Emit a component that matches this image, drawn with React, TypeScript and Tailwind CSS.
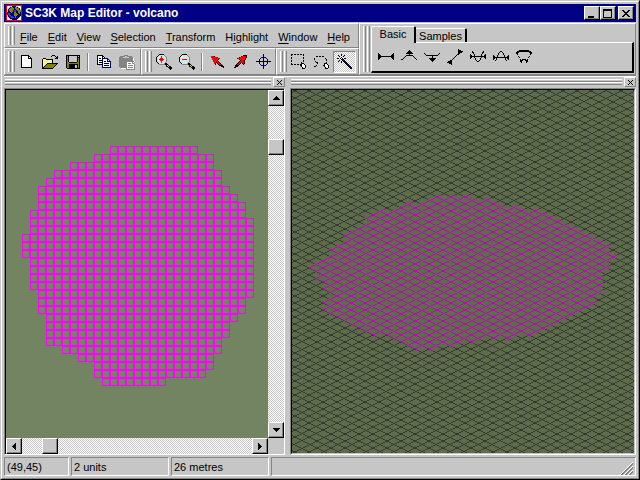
import React from "react";

const palette: Record<string, string> = {
  k: "#000000",
  w: "#ffffff",
  g: "#848484",
  o: "#848400",
  y: "#ffff00",
  b: "#000084",
  r: "#ff0000",
  c: "#d6e7e7",
  l: "#3a3ade",
  p: "#ffd6d6",
  s: "#c6c6e7",
};

const icons = {
  globe: [
    "rrrrrrrrrrrrrrrr",
    "rpwwsskbbbsswwpr",
    "rwwsboobbookswwr",
    "rwsbooooboooobwr",
    "rwbooooobbooobsr",
    "rsboooobllboooor",
    "rsbbooobllbbooor",
    "rbbbbobboobboobr",
    "rbllbbbbooobbobr",
    "rbllbbbboooobbkr",
    "rsbllbbbooobbbkr",
    "rwbblllbbobbbksr",
    "rwsbblllbobbkswr",
    "rwwskbbbbbbkswwr",
    "rpwwsskkkkkswwpr",
    "rrrrrrrrrrrrrrrr",
  ],
  newFile: [
    "",
    "..kkkkkkkk",
    "..kwwwwwwkk",
    "..kwwwwwwkwk",
    "..kwwwwwwkkkk",
    "..kwwwwwwwwwk",
    "..kwwwwwwwwwk",
    "..kwwwwwwwwwk",
    "..kwwwwwwwwwk",
    "..kwwwwwwwwwk",
    "..kwwwwwwwwwk",
    "..kwwwwwwwwwk",
    "..kwwwwwwwwwk",
    "..kkkkkkkkkkk",
  ],
  open: [
    "",
    "..........kkk",
    ".........k...k.k",
    "..............kk",
    ".kkk.........kkk",
    "kwywkkkkkkk",
    "kywywywywyk",
    "kwywywywywk",
    "kywywywywyk",
    "kwywykkkkkkkkkkk",
    "kywykoooooooook",
    "kwykoooooooook",
    "kykoooooooook",
    "kkoooooooook",
    "kkkkkkkkkkk",
  ],
  save: [
    "",
    ".kkkkkkkkkkkkkk",
    ".kok........k.k",
    ".kok........kkk",
    ".kok........kok",
    ".kok........kok",
    ".kok........kok",
    ".kok........kok",
    ".kookkkkkkkkook",
    ".kooooooooooook",
    ".kookkkkkkkkkok",
    ".kookkkkkk..kok",
    ".kookkkkkk..kok",
    ".kookkkkkk..kok",
    "..kkkkkkkkkkkkk",
  ],
  copy: [
    "",
    ".kkkkkk",
    ".kwwwwkk",
    ".kwwwwkwk",
    ".kwkkwbbbbbb",
    ".kwwwwbwwwwbb",
    ".kwkkkbwwwwbwb",
    ".kwwwwbwkkwbbbb",
    ".kwkkkbwwwwwwwb",
    ".kwwwwbwkkkkkwb",
    ".kkkkkbwwwwwwwb",
    "......bwkkkkkwb",
    "......bwwwwwwwb",
    "......bbbbbbbbb",
  ],
  paste: [
    "",
    ".....gggg",
    ".ggggg..ggggg",
    "gggg......gggg",
    "ggggggggggggggw",
    "ggggggggggggggw",
    "ggggggggggggggw",
    "gggggggggggggggw",
    "ggggggggwwwwwgw",
    "ggggggggwgggwgg",
    "ggggggggwwwwwwwg",
    "ggggggggwgggggwg",
    "ggggggggwwwwwwwg",
    ".gggggggwgggggwg",
    "..wwwwwgwwwwwwwg",
    ".......ggggggggg",
  ],
  zoomIn: [
    "...kkkkk",
    "..kcccccg",
    ".kcwcrcccg",
    "kcwccrccccg",
    "kcccrrrcccg",
    "kccrrrrrccg",
    "kcccrrrcccg",
    "kccccrccccg",
    ".kcccrcccg",
    "..kcccccgkk",
    "...ggggggkkk",
    "..........kyk",
    "..........kkykk",
    "............kkkk",
    ".............kkk",
    "..............k",
  ],
  zoomOut: [
    "...kkkkk",
    "..kcccccg",
    ".kcwcccccg",
    "kcwcccccccg",
    "kcccccccccg",
    "kccrrrrrccg",
    "kcccccccccg",
    "kcccccccccg",
    ".kcccccccg",
    "..kcccccgkk",
    "...ggggggkkk",
    "..........kyk",
    "..........kkykk",
    "............kkkk",
    ".............kkk",
    "..............k",
  ],
  arrowLeft: [
    "",
    "",
    ".rrrk",
    ".rrrrrrk",
    "..rrrrrrrk",
    "..rrrrrrk",
    "...rrrrk",
    "...rrrrrk",
    "....rrkrrk",
    "....rk.krrk",
    ".....k..krrk",
    ".........kkkk",
    "...........kkk",
    ".............k",
  ],
  arrowRight: [
    "",
    "..........kkkk",
    "........krrrrk",
    "......krrrrrrk",
    "....krrrrrrrk",
    "......krrrrrk",
    ".......krrrk",
    "......krrrrk",
    ".....krrkrrk",
    "....krrk.krk",
    "...krrk...k",
    "..kkkk",
    "..kkk",
    ".kk",
  ],
  target: [
    ".......k",
    ".......k",
    ".......k",
    ".....bbkbb",
    "....b..k..b",
    "...b...k...b",
    "...b...k...b",
    "kkkkkkkkkkkkkkk",
    "...b...k...b",
    "...b...k...b",
    "....b..k..b",
    ".....bbkbb",
    ".......k",
    ".......k",
    ".......k",
  ],
  marquee: [
    "kk.kk.kk.kk.k",
    "k...........k",
    "",
    "k...........k",
    "k...........k",
    "",
    "k...........k",
    "k...........k",
    "..........k",
    "k.........kkk",
    "kk.kk.kk.kkwwk",
    ".........kkwwwk",
    "..........kwwwk",
    "...........kwwk",
    "...........kkk",
  ],
  lasso: [
    "",
    "",
    "..kk.kk.kk",
    "",
    "k..........k",
    "k...........k",
    "............k",
    ".k...........",
    "..kk........k",
    "...k......kkk",
    "..........kwwk",
    "..k......kkwwwk",
    "kk........kwwwk",
    "...........kwwk",
    "...........kkk",
  ],
  wand: [
    "....k",
    ".k..k..k",
    "..k...k",
    "....k",
    "kk.kwk.kk",
    "....kbk",
    "..k..kbk",
    ".k..k.kbk",
    "....k..kbk",
    "........kbk",
    ".........kbk",
    "..........kbk",
    "...........kbk",
    "............kbk",
    ".............kk",
  ],
  level: [
    "",
    "",
    "",
    "",
    "k..............k",
    "kk............kk",
    "kkk..........kkk",
    "kkkkkkkkkkkkkkkk",
    "kkk..........kkk",
    "kk............kk",
    "k..............k",
  ],
  raise: [
    "",
    "........k",
    ".......kkk",
    "......kkkkk",
    ".....kkkkkkk",
    "........k",
    ".....kkkkkkk",
    "....k.......k",
    "...k.........k",
    "..k...........k",
    "kk.............k",
  ],
  lower: [
    "",
    "",
    "",
    "",
    "k..............k",
    ".k............k",
    "..kkkkkkkkkkkk",
    "........k",
    "........k",
    ".....kkkkkkk",
    "......kkkkk",
    ".......kkk",
    "........k",
  ],
  slope: [
    "...........k",
    "...........kkk",
    "...........kkkkk",
    "...........kkkk",
    "...........kk",
    "..........kk",
    ".........k",
    "........k",
    ".......k",
    "......k",
    ".....k",
    "...kk",
    ".kkkk",
    "kkkkk",
    "..kkk",
    "....k",
  ],
  valley: [
    "",
    "",
    "..k..........k",
    "..kk........kk",
    "...k........k",
    "k...k......k...k",
    "kk..k......k..kk",
    "kkkkkkkkkkkkkkkk",
    "kk..k......k..kk",
    "k....k....k....k",
    ".....k....k",
    "......k..k",
    ".......kk",
  ],
  hill: [
    "",
    "",
    ".......kk",
    "......k..k",
    ".....k....k",
    ".....k....k",
    "k...k......k...k",
    "kk..k......k..kk",
    "kkkkkkkkkkkkkkkk",
    "kk.k........k.kk",
    "k..k........k..k",
    "..k..........k",
  ],
  crater: [
    "",
    "...kkkkkkkkkk",
    ".kkkkkkkkkkkkkk",
    "kkk..........kkk",
    "kk............kk",
    ".k............k",
    "",
    "..k..........k",
    "...k........k",
    "",
    "....k.kkkk.k",
    "....kkk..kkk",
    "....kk....kk",
    ".....k....k",
  ],
  close: ["kk....kk", ".kk..kk", "..kkkk", "...kk", "..kkkk", ".kk..kk", "kk....kk"],
  maximize: [
    "kkkkkkkkk",
    "kkkkkkkkk",
    "k.......k",
    "k.......k",
    "k.......k",
    "k.......k",
    "k.......k",
    "k.......k",
    "kkkkkkkkk",
  ],
  minimize: ["", "", "", "", "", "", "", "kkkkkk", "kkkkkk"],
  smallClose: ["k...k", ".k.k", "..k", ".k.k", "k...k"],
  up: ["...k", "..kkk", ".kkkkk", "kkkkkkk"],
  down: ["kkkkkkk", ".kkkkk", "..kkk", "...k"],
  left: ["...k", "..kk", ".kkk", "kkkk", ".kkk", "..kk", "...k"],
  right: ["k", "kk", "kkk", "kkkk", "kkk", "kk", "k"],
};

type IconName = keyof typeof icons;

type PixelIconProps = {
  name: IconName;
};

const PixelIcon: React.FC<PixelIconProps> = ({ name }) => {
  const rows = icons[name];
  const width = Math.max(...rows.map((row) => row.length));
  const size = width > 12 ? 16 : width;
  const height = width > 12 ? 16 : rows.length;

  return (
    <svg
      width={size}
      height={height}
      shapeRendering="crispEdges"
      className="block shrink-0"
      aria-hidden="true"
    >
      {rows.map((row, y) =>
        row
          .split("")
          .map((p, x) =>
            palette[p] ? (
              <rect key={`${x}-${y}`} x={x} y={y} width="1" height="1" fill={palette[p]} />
            ) : null
          )
      )}
    </svg>
  );
};

const raised =
  "bg-[#c6c6c6] border border-t-white border-l-white border-b-black border-r-black shadow-[inset_-1px_-1px_0_#848484]";

const Gripper = () => (
  <div className="flex gap-px py-0.5 pl-[3px] shrink-0">
    <div className="w-[3px] bg-[#c6c6c6] border-l border-r border-l-white border-r-[#848484]" />
    <div className="w-[3px] bg-[#c6c6c6] border-l border-r border-l-white border-r-[#848484]" />
  </div>
);

const Separator = () => (
  <div className="w-2 h-[22px] flex justify-center py-0.5">
    <div className="w-0.5 border-l border-r border-l-[#848484] border-r-white" />
  </div>
);

type ToolButtonProps = {
  name: IconName;
  label: string;
  pressed?: boolean;
};

const ToolButton: React.FC<ToolButtonProps> = ({ name, label, pressed }) => (
  <button
    aria-label={label}
    className={
      pressed
        ? "w-[23px] h-[22px] pl-[3px] flex items-center border border-t-[#848484] border-l-[#848484] border-b-white border-r-white bg-[repeating-conic-gradient(#ffffff_0_25%,#c6c6c6_0_50%)] bg-[length:2px_2px]"
        : "w-[23px] h-[22px] pl-1 flex items-center"
    }
  >
    <PixelIcon name={name} />
  </button>
);

const band =
  "flex border-t border-l border-b border-r border-t-white border-l-white border-b-[#848484] border-r-[#848484]";

const menus = [
  ["", "F", "ile"],
  ["", "E", "dit"],
  ["", "V", "iew"],
  ["", "S", "election"],
  ["", "T", "ransform"],
  ["H", "i", "ghlight"],
  ["", "W", "indow"],
  ["", "H", "elp"],
];

const TitleBar = () => (
  <header className="h-[18px] shrink-0 bg-[#000084] flex items-center pl-0.5 pr-0.5">
    <PixelIcon name="globe" />
    <h1 className="flex-1 pl-[3px] text-white font-bold text-[12px] leading-4 whitespace-nowrap">
      SC3K Map Editor - volcano
    </h1>
    <button aria-label="Minimize" className={`w-4 h-3.5 pl-[3px] pt-px ${raised}`}>
      <PixelIcon name="minimize" />
    </button>
    <button aria-label="Maximize" className={`w-4 h-3.5 pl-0.5 pt-px ${raised}`}>
      <PixelIcon name="maximize" />
    </button>
    <button aria-label="Close" className={`w-4 h-3.5 ml-0.5 pl-[3px] ${raised}`}>
      <PixelIcon name="close" />
    </button>
  </header>
);

const MenuBar = () => (
  <nav className={`${band} h-[25px]`}>
    <Gripper />
    <div className="flex items-center pt-0.5">
      {menus.map(([before, key, after]) => (
        <button key={after} className="px-[5px] whitespace-nowrap">
          {before}
          <span className="underline underline-offset-2">{key}</span>
          {after}
        </button>
      ))}
    </div>
  </nav>
);

const ToolBars = () => (
  <div className="flex h-[27px]">
    <div className={`${band} pr-0.5`}>
      <Gripper />
      <div className="flex items-center">
        <ToolButton name="newFile" label="New" />
        <ToolButton name="open" label="Open" />
        <ToolButton name="save" label="Save" />
        <Separator />
        <ToolButton name="copy" label="Copy" />
        <ToolButton name="paste" label="Paste" />
      </div>
    </div>
    <div className={band}>
      <Gripper />
      <div className="flex items-center">
        <ToolButton name="zoomIn" label="Zoom in" />
        <ToolButton name="zoomOut" label="Zoom out" />
        <Separator />
        <ToolButton name="arrowLeft" label="Rotate left" />
        <ToolButton name="arrowRight" label="Rotate right" />
        <ToolButton name="target" label="Centre" />
      </div>
    </div>
    <div className={`${band} flex-1`}>
      <Gripper />
      <div className="flex items-center">
        <ToolButton name="marquee" label="Select rectangle" />
        <ToolButton name="lasso" label="Lasso" />
        <ToolButton name="wand" label="Magic wand" pressed />
      </div>
    </div>
  </div>
);

const shapeTools: [IconName, string][] = [
  ["level", "Level"],
  ["raise", "Raise"],
  ["lower", "Lower"],
  ["slope", "Slope"],
  ["valley", "Valley"],
  ["hill", "Hill"],
  ["crater", "Crater"],
];

const ShapeTabs = () => (
  <section className={`${band} flex-1 pr-px`}>
    <Gripper />
    <div className="flex-1 flex flex-col pl-px pt-0.5 pb-px">
      <div role="tablist" className="flex items-end h-4">
        <button
          role="tab"
          aria-selected="true"
          className="relative z-10 h-[17px] -mb-px w-[45px] leading-[14px] pb-0.5 bg-[#c6c6c6] border-t border-l border-r-2 border-t-white border-l-white border-r-black rounded-t-xs"
        >
          Basic
        </button>
        <button
          role="tab"
          aria-selected="false"
          className="h-3.5 w-[51px] leading-[14px] overflow-hidden border-t border-r-2 border-t-white border-r-black rounded-tr-xs"
        >
          Samples
        </button>
      </div>
      <div className="flex-1 flex items-center pl-0.5 border-t border-l border-b-2 border-r-2 border-t-white border-l-white border-b-black border-r-black">
        {shapeTools.map(([name, label]) => (
          <ToolButton key={name} name={name} label={label} />
        ))}
      </div>
    </div>
  </section>
);

const PaneHandle = () => (
  <div className="flex h-[11px] gap-0.5 shrink-0">
    <div className="flex-1 flex flex-col pt-0.5 pl-px">
      <div className="h-[3px] border-t border-b border-t-white border-b-[#848484]" />
      <div className="h-[3px] border-t border-b border-t-white border-b-[#848484]" />
    </div>
    <button
      aria-label="Close pane"
      className="w-3 h-2.5 pl-[3px] pt-px border border-t-white border-l-white border-b-[#848484] border-r-[#848484]"
    >
      <PixelIcon name="smallClose" />
    </button>
  </div>
);

// [first, end) column of the selection for every row of the map
const selection = [
  [11, 22], [9, 24], [6, 24], [4, 25], [3, 25], [2, 26], [2, 27], [2, 28],
  [1, 28], [1, 29], [1, 29], [0, 29], [0, 29], [0, 29], [1, 29], [1, 29],
  [1, 29], [1, 29], [2, 29], [2, 28], [2, 28], [3, 27], [3, 26], [3, 26],
  [3, 25], [5, 25], [7, 24], [9, 24], [9, 23], [10, 18],
];

const FlatMap = () => {
  const d = selection
    .map(([from, to], row) => {
      let cells = "";
      for (let col = from; col < to; col++) {
        cells += `M${16.5 + col * 8} ${56.5 + row * 8}h7v7h-7z`;
      }
      return cells;
    })
    .join("");

  return (
    <svg className="w-full h-full bg-[#738463]" role="img" aria-label="Flat map">
      <path d={d} fill="none" stroke="#ff00ff" shapeRendering="crispEdges" />
    </svg>
  );
};

const IsoMap = () => {
  // the lattice step is a 10 unit cell turned by 45 degrees,
  // every line starts at the same fraction of a pixel so that all are equally thick
  const step = 10 / Math.SQRT2;
  let grid = "";
  for (let i = -110; i < 240; i++) {
    const down = Math.round(98 + i * step) + 0.37;
    const up = Math.round(108 + i * step) + 0.37;
    grid += `M0 ${down}L1200 ${down + 600}M0 ${up}L1200 ${up - 600}`;
  }

  const point = (col: number, row: number) =>
    `${(168 + (col - row) * 6.95).toFixed(1)} ${(79 + (col + row) * 3.5).toFixed(1)}`;
  const area = selection
    .map(
      ([from, to], row) =>
        `M${point(from, row)}L${point(to, row)}L${point(to, row + 1)}L${point(from, row + 1)}z`
    )
    .join("");

  return (
    <svg className="w-full h-full bg-[#5d6d4a]" role="img" aria-label="Isometric map">
      <defs>
        <clipPath id="selected">
          <path d={area} />
        </clipPath>
      </defs>
      <path d={grid} fill="none" stroke="#333333" strokeWidth="0.9" shapeRendering="crispEdges" />
      <path
        d={grid}
        fill="none"
        stroke="#cc00cc"
        strokeWidth="0.9"
        shapeRendering="crispEdges"
        clipPath="url(#selected)"
      />
    </svg>
  );
};

const track =
  "flex bg-[repeating-conic-gradient(#ffffff_0_25%,#c6c6c6_0_50%)] bg-[length:2px_2px]";
const scrollButton = `size-4 shrink-0 flex items-center justify-center ${raised}`;

const FlatPane = () => (
  <section className="flex flex-col min-h-0">
    <PaneHandle />
    <div className="flex-1 min-h-0 border border-t-[#848484] border-l-[#848484] border-b-white border-r-white">
      <div className="h-full grid grid-cols-[minmax(0,1fr)_16px] grid-rows-[minmax(0,1fr)_16px] border-t border-l border-black">
        <FlatMap />
        <div className={`${track} flex-col`}>
          <button aria-label="Scroll up" className={scrollButton}>
            <PixelIcon name="up" />
          </button>
          <div className="flex-1 pt-[33px]">
            <div className={`size-4 ${raised}`} />
          </div>
          <button aria-label="Scroll down" className={scrollButton}>
            <PixelIcon name="down" />
          </button>
        </div>
        <div className={track}>
          <button aria-label="Scroll left" className={scrollButton}>
            <PixelIcon name="left" />
          </button>
          <div className="flex-1 pl-5">
            <div className={`size-4 ${raised}`} />
          </div>
          <button aria-label="Scroll right" className={scrollButton}>
            <PixelIcon name="right" />
          </button>
        </div>
      </div>
    </div>
  </section>
);

const IsoPane = () => (
  <section className="flex flex-col min-h-0">
    <PaneHandle />
    <div className="flex-1 min-h-0 border border-t-[#848484] border-l-[#848484] border-b-white border-r-white">
      <div className="h-full border-t border-l border-t-black border-l-black border-r border-b border-r-[#c6c6c6] border-b-[#c6c6c6]">
        <IsoMap />
      </div>
    </div>
  </section>
);

const statusPane =
  "px-0.5 flex items-center border border-t-[#848484] border-l-[#848484] border-b-white border-r-white";

const StatusBar = () => (
  <footer className="flex gap-0.5 h-[19px] mt-0.5 shrink-0">
    <div className={`w-[65px] ${statusPane}`}>(49,45)</div>
    <div className={`w-[98px] ${statusPane}`}>2 units</div>
    <div className={`w-[98px] ${statusPane}`}>26 metres</div>
    <div className={`flex-1 justify-end items-end ${statusPane}`}>
      <svg width="13" height="13" className="block" aria-hidden="true">
        <path d="M0 13L13 0M4 13L13 4M8 13L13 8" stroke="#ffffff" />
        <path d="M1 13L13 1M2 13L13 2M5 13L13 5M6 13L13 6M9 13L13 9M10 13L13 10" stroke="#848484" />
      </svg>
    </div>
  </footer>
);

export default function App() {
  return (
    <div className="h-screen w-full border border-t-[#c6c6c6] border-l-[#c6c6c6] border-b-black border-r-black bg-[#c6c6c6] text-black text-[11px] leading-4 font-['Liberation_Sans',Arial,sans-serif]">
      <div className="h-full flex flex-col p-0.5 border border-t-white border-l-white border-b-[#848484] border-r-[#848484]">
        <TitleBar />
        <div className="flex shrink-0 mt-px">
          <div className="w-[355px] shrink-0">
            <MenuBar />
            <ToolBars />
          </div>
          <ShapeTabs />
        </div>
        <div className="h-0.5 shrink-0 border-t border-b border-t-[#848484] border-b-white" />
        <main className="flex-1 min-h-0 grid grid-cols-[minmax(0,281fr)_minmax(0,346fr)] gap-x-[5px]">
          <FlatPane />
          <IsoPane />
        </main>
        <StatusBar />
      </div>
    </div>
  );
}
